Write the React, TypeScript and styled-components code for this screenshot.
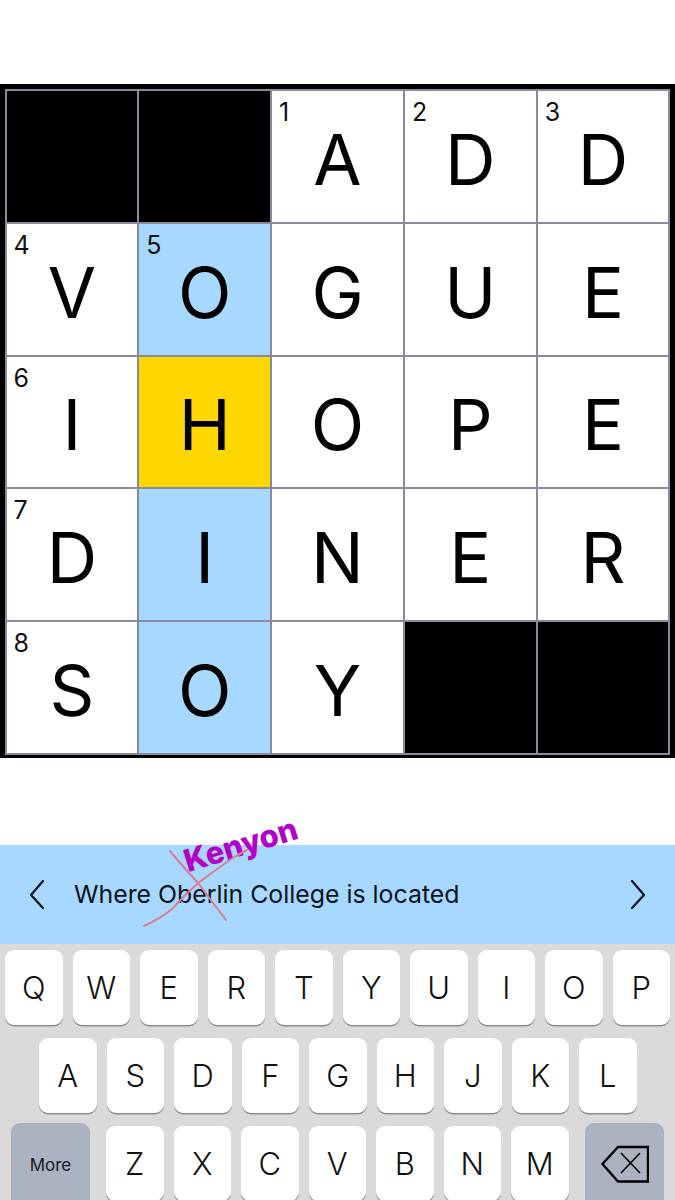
import React from "react";
import styled, { createGlobalStyle } from "styled-components";

const Global = createGlobalStyle`
  html, body { margin: 0; padding: 0; background: #fff; }
  body { font-family: Inter, "Liberation Sans", sans-serif; }
`;

const Page = styled.div`
  width: 675px;
  height: 1200px;
  overflow: hidden;
  display: flex;
  flex-direction: column;
  padding-top: 84px;
  box-sizing: border-box;
`;

const Board = styled.div`
  display: grid;
  grid-template-columns: repeat(5, 132.8px);
  grid-auto-rows: 132.8px;
  padding: 5px 0 0 4.5px;
  background: #000;
  height: 674px;
  flex: none;
  box-sizing: border-box;
`;

const Cell = styled.div<{ $kind: string }>`
  position: relative;
  box-sizing: border-box;
  margin: 0 -2px -2px 0;
  border: 2px solid #8a8a9c;
  display: flex;
  align-items: center;
  justify-content: center;
  color: #000;
  font-family: Inter, "Liberation Sans", Arial, sans-serif;
  font-size: 70px;
  line-height: 1;
  padding-top: 7px;
  background: ${(p) =>
    p.$kind === "black" ? "#000" : p.$kind === "word" ? "#a7d8ff" : p.$kind === "active" ? "#ffd700" : "#fff"};
`;

const Num = styled.span`
  position: absolute;
  left: 7px;
  top: 6px;
  font-family: Inter, "Liberation Sans", sans-serif;
  font-size: 25px;
  line-height: 30px;
  font-weight: 400;
  color: #111;
`;

const Clue = styled.div`
  position: relative;
  margin-top: 86.5px;
  height: 99.5px;
  flex: none;
  background: #a7d8ff;
  display: flex;
  align-items: center;
  padding: 0 27px;
  box-sizing: border-box;
`;

const Chevron = styled.svg`
  width: 20px;
  height: 32px;
  flex: none;
  fill: none;
  stroke: #0b1220;
  stroke-width: 2.2;
  stroke-linecap: round;
  stroke-linejoin: round;
`;

const ClueText = styled.div`
  flex: 1;
  padding-left: 27px;
  font-size: 24.85px;
  line-height: 30px;
  color: #0b1220;
  white-space: nowrap;
`;

const Scribble = styled.svg`
  position: absolute;
  left: 135px;
  top: 0;
  width: 115px;
  height: 90px;
  fill: none;
  stroke: #d9808c;
  stroke-width: 2;
  stroke-linecap: round;
`;

const Kenyon = styled.span`
  position: absolute;
  left: 190px;
  top: -2px;
  font-family: Inter, "Liberation Sans", Arial, sans-serif;
  font-weight: 800;
  font-size: 31px;
  line-height: 36px;
  color: #b400c8;
  transform: rotate(-17deg);
  transform-origin: left bottom;
`;

const Keyboard = styled.div`
  flex: 1;
  background: #dadadb;
  display: flex;
  flex-direction: column;
  gap: 13px;
  padding-top: 6px;
`;

const KeyRow = styled.div<{ $pad: number }>`
  display: flex;
  gap: 10px;
  padding-left: ${(p) => p.$pad}px;
  height: 75px;
  flex: none;
`;

const Key = styled.div`
  width: 57.5px;
  height: 75px;
  flex: none;
  background: #fff;
  border-radius: 9px;
  box-shadow: 0 1.5px 0 #8b8d92;
  display: flex;
  align-items: center;
  justify-content: center;
  padding-bottom: 1px;
  box-sizing: border-box;
  font-size: 31px;
  color: #111;
  font-weight: 350;
`;

const FnKey = styled.div<{ $right?: boolean }>`
  width: 79px;
  height: 90px;
  flex: none;
  margin-top: -3px;
  margin-left: ${(p) => (p.$right ? "6.5px" : "0")};
  margin-right: ${(p) => (p.$right ? "0" : "6px")};
  background: #aab3bf;
  border-radius: 9px;
  display: flex;
  align-items: flex-start;
  justify-content: center;
  padding-top: ${(p) => (p.$right ? "22px" : "30px")};
  box-sizing: border-box;
  font-size: 17px;
  line-height: 24px;
  color: #151a24;
`;

const Backspace = styled.svg`
  width: 48px;
  height: 38px;
  fill: none;
  stroke: #000;
  stroke-width: 2.4;
`;

const rows: [string, string][] = [
  ["##ADD", "##123"],
  ["VOGUE", "45   "],
  ["IHOPE", "6    "],
  ["DINER", "7    "],
  ["SOY##", "8    "],
];

const kindOf = (r: number, c: number, ch: string) => {
  if (ch === "#") return "black";
  if (c === 1 && r === 2) return "active";
  if (c === 1) return "word";
  return "plain";
};

export default function App() {
  return (
    <Page>
      <Global />
      <Board>
        {rows.map(([letters, nums], r) =>
          letters.split("").map((ch, c) => (
            <Cell key={`${r}-${c}`} $kind={kindOf(r, c, ch)}>
              {nums[c] !== " " && nums[c] !== "#" && <Num>{nums[c]}</Num>}
              {ch !== "#" && ch}
            </Cell>
          ))
        )}
      </Board>
      <Clue>
        <Chevron viewBox="0 0 20 32">
          <path d="M16 3 L4 17 L16 30" />
        </Chevron>
        <ClueText>Where Oberlin College is located</ClueText>
        <Chevron viewBox="0 0 20 32">
          <path d="M4 3 L16 17 L4 30" />
        </Chevron>
        <Kenyon>Kenyon</Kenyon>
        <Scribble viewBox="0 0 115 90">
          <path d="M35 6 C44 17 54 28 63 38 C72 50 82 63 91 75" />
          <path d="M9 81 C20 76 30 70 38 63 C46 54 54 46 63 38 C74 30 86 21 98 13 C103 10 108 7 112 5" />
        </Scribble>
      </Clue>
      <Keyboard>
        <KeyRow $pad={5}>
          {"QWERTYUIOP".split("").map((k) => (
            <Key key={k}>{k}</Key>
          ))}
        </KeyRow>
        <KeyRow $pad={39}>
          {"ASDFGHJKL".split("").map((k) => (
            <Key key={k}>{k}</Key>
          ))}
        </KeyRow>
        <KeyRow $pad={11}>
          <FnKey>More</FnKey>
          {"ZXCVBNM".split("").map((k) => (
            <Key key={k}>{k}</Key>
          ))}
          <FnKey $right>
            <Backspace viewBox="0 0 48 38">
              <path d="M1.5 19 L17 2 H47 V36.5 H17 Z" />
              <path d="M20 8 L39 28 M39 8 L20 28" strokeWidth="1.6" />
            </Backspace>
          </FnKey>
        </KeyRow>
      </Keyboard>
    </Page>
  );
}
